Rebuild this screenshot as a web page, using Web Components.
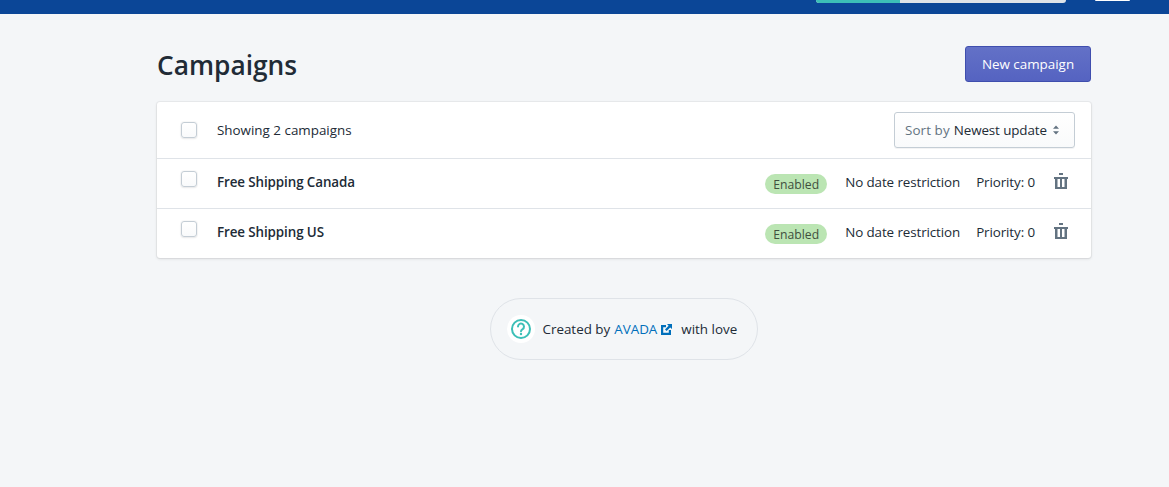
<!DOCTYPE html>
<html>
<head>
<meta charset="utf-8">
<title>Campaigns</title>
<style>
  html, body { margin: 0; height: 100%; }
  body {
    background: #f4f6f8;
    color: #212b36;
    font: 13.4px/20px "Open Sans", "Noto Sans", sans-serif;
    overflow: hidden;
  }
</style>
</head>
<body>
<app-topbar></app-topbar>
<campaigns-page>
  <page-heading title="Campaigns">New campaign</page-heading>
  <campaign-card>
    <list-header slot="header" count="2"></list-header>
    <campaign-row name="Free Shipping Canada"></campaign-row>
    <campaign-row name="Free Shipping US"></campaign-row>
  </campaign-card>
  <created-by></created-by>
</campaigns-page>

<script>
class AppTopbar extends HTMLElement {
  constructor() {
    super();
    this.attachShadow({ mode: 'open' });
    this.shadowRoot.innerHTML = `
      <style>
        :host { display: flex; height: 14px; background: #0b4697; padding-left: 816px; align-items: flex-start; }
        .progress { display: flex; width: 250px; height: 3px; background: #dfe3e8; border-radius: 0 0 3px 3px; overflow: hidden; }
        .progress i { width: 84px; background: #3cbfb7; }
        .avatar { width: 35px; height: 1px; margin-left: 29px; background: #fff; border-radius: 0 0 4px 4px; }
      </style>
      <div class="progress"><i></i></div>
      <div class="avatar"></div>
    `;
  }
}

class CampaignsPage extends HTMLElement {
  constructor() {
    super();
    this.attachShadow({ mode: 'open' });
    this.shadowRoot.innerHTML = `
      <style>
        :host { display: flex; flex-direction: column; width: 934px; margin-left: 157px; padding-top: 32px; }
      </style>
      <slot></slot>
    `;
  }
}

class PageHeading extends HTMLElement {
  constructor() {
    super();
    this.attachShadow({ mode: 'open' });
    this.shadowRoot.innerHTML = `
      <style>
        :host { display: flex; justify-content: space-between; align-items: center; height: 36px; margin-bottom: 20px; }
        h1 { margin: 2px 0 0; font-size: 26.3px; line-height: 36px; font-weight: 600; color: #212b36; }
        button {
          box-sizing: border-box; width: 126px; height: 36px; padding: 0; cursor: pointer;
          font: inherit; color: #fff;
          border: 1px solid #3f4eae; border-radius: 3px;
          background: linear-gradient(180deg, #6371c7, #5563c1);
        }
      </style>
      <h1></h1>
      <button><slot></slot></button>
    `;
    this.shadowRoot.querySelector('h1').textContent = this.getAttribute('title');
  }
}

class CampaignCard extends HTMLElement {
  constructor() {
    super();
    this.attachShadow({ mode: 'open' });
    this.shadowRoot.innerHTML = `
      <style>
        :host {
          display: block; background: #fff; border-radius: 3px;
          box-shadow: 0 0 0 1px rgba(63,63,68,.05), 0 1px 3px 0 rgba(63,63,68,.15);
        }
      </style>
      <slot name="header"></slot>
      <slot></slot>
    `;
  }
}

class ListCheckbox extends HTMLElement {
  constructor() {
    super();
    this.attachShadow({ mode: 'open' });
    this.shadowRoot.innerHTML = `
      <style>
        :host {
          display: block; box-sizing: border-box; width: 16px; height: 16px;
          border: 1px solid #c4cdd5; border-radius: 3px;
          background: linear-gradient(180deg, #fff, #f9fafb);
          box-shadow: 0 0 0 1px rgba(63,63,68,.03), 0 1px 2px rgba(22,29,37,.08);
        }
      </style>
    `;
  }
}

class ListHeader extends HTMLElement {
  constructor() {
    super();
    this.attachShadow({ mode: 'open' });
    this.shadowRoot.innerHTML = `
      <style>
        :host {
          display: flex; align-items: center; box-sizing: border-box; height: 57px;
          padding: 0 16px 0 24px; border-bottom: 1px solid #dfe3e8;
        }
        list-checkbox { margin-right: 20px; }
        .count { flex: 1; color: #212b36; }
        .sort {
          display: flex; align-items: center; box-sizing: border-box; width: 181px; height: 36px; padding: 0 10px;
          border: 1px solid #c4cdd5; border-radius: 3px;
          background: linear-gradient(180deg, #fff, #f9fafb);
          box-shadow: 0 1px 0 rgba(22,29,37,.05);
          white-space: nowrap;
        }
        .sort span { color: #637381; margin-right: 4px; letter-spacing: .1px; }
        .sort b { font-weight: 400; letter-spacing: -.1px; }
        svg { margin-left: 5px; }
      </style>
      <list-checkbox></list-checkbox>
      <div class="count"></div>
      <div class="sort">
        <span>Sort by</span><b>Newest update</b>
        <svg width="8" height="10" viewBox="0 0 8 10"><path d="M4 0.5 7 3.8H1zM4 9.5 1 6.2h6z" fill="#637381"/></svg>
      </div>
    `;
    const n = this.getAttribute('count');
    this.shadowRoot.querySelector('.count').textContent = `Showing ${n} campaigns`;
  }
}

class CampaignRow extends HTMLElement {
  constructor() {
    super();
    this.attachShadow({ mode: 'open' });
    this.shadowRoot.innerHTML = `
      <style>
        :host {
          display: flex; align-items: center; box-sizing: border-box; height: 50px;
          padding: 0 23px 0 24px; border-bottom: 1px solid #dfe3e8;
        }
        :host(:last-child) { height: 49px; border-bottom: 0; }
        .line { display: flex; align-items: center; flex: 1; margin-top: -3px; }
        list-checkbox { margin: -7px 20px 0 0; }
        .name { flex: 1; font-weight: 600; letter-spacing: -.1px; color: #212b36; }
        .badge {
          height: 20px; padding: 0 8px; margin: 4px 18px 0 0; border-radius: 10px;
          background: #bbe5b3; color: #414f3e; font-size: 12.2px; line-height: 21px;
        }
        .date { margin-right: 16px; letter-spacing: -.1px; }
        .priority { margin-right: 19px; letter-spacing: -.1px; }
        svg { display: block; margin-top: -3px; }
      </style>
      <div class="line">
        <list-checkbox></list-checkbox>
        <div class="name"></div>
        <div class="badge">Enabled</div>
        <div class="date">No date restriction</div>
        <div class="priority">Priority: 0</div>
        <svg width="14" height="16" viewBox="0 0 14 16" fill="#637381">
          <rect x="5" y="0" width="4" height="2"/>
          <rect x="0" y="4" width="14" height="2"/>
          <path d="M1 6h2.5v8H6V6h2v8h2.5V6H13v10H1z"/>
        </svg>
      </div>
    `;
    this.shadowRoot.querySelector('.name').textContent = this.getAttribute('name');
  }
}

class CreatedBy extends HTMLElement {
  constructor() {
    super();
    this.attachShadow({ mode: 'open' });
    this.shadowRoot.innerHTML = `
      <style>
        :host {
          display: flex; align-items: center; align-self: center; box-sizing: border-box;
          height: 62px; width: 268px; margin: 40px 0 0 -1px; padding-left: 16px;
          border: 1px solid #dfe3e8; border-radius: 31px; white-space: nowrap;
        }
        .help {
          display: flex; align-items: center; justify-content: center;
          width: 28px; height: 28px; border-radius: 50%; background: #fff; margin-right: 8px;
        }
        a { color: #006fbb; text-decoration: none; margin-left: 4px; }
        .ext { margin: 0 9px 0 4px; }
      </style>
      <div class="help">
        <svg width="22" height="22" viewBox="0 0 22 22" fill="none" stroke="#3cbfb7" stroke-width="2">
          <circle cx="11" cy="11" r="9"/>
          <path d="M8 8.6a3 3 0 1 1 4.6 2.5c-1 .6-1.6 1.1-1.6 2.2" stroke-linecap="round"/>
          <circle cx="11" cy="16" r="1.2" fill="#3cbfb7" stroke="none"/>
        </svg>
      </div>
      <span>Created by<a href="#">AVADA</a></span>
      <svg class="ext" width="11" height="11" viewBox="0 0 11 11" fill="#006fbb">
        <path d="M0 1h5v2.2H2.2v5.6h5.6V6H10v5H0z"/>
        <path d="M6 0h5v5L9.2 3.4 5.6 7 4 5.4 7.6 1.8z"/>
      </svg>
      <span>with love</span>
    `;
  }
}

customElements.define('app-topbar', AppTopbar);
customElements.define('campaigns-page', CampaignsPage);
customElements.define('page-heading', PageHeading);
customElements.define('campaign-card', CampaignCard);
customElements.define('list-checkbox', ListCheckbox);
customElements.define('list-header', ListHeader);
customElements.define('campaign-row', CampaignRow);
customElements.define('created-by', CreatedBy);
</script>
</body>
</html>
